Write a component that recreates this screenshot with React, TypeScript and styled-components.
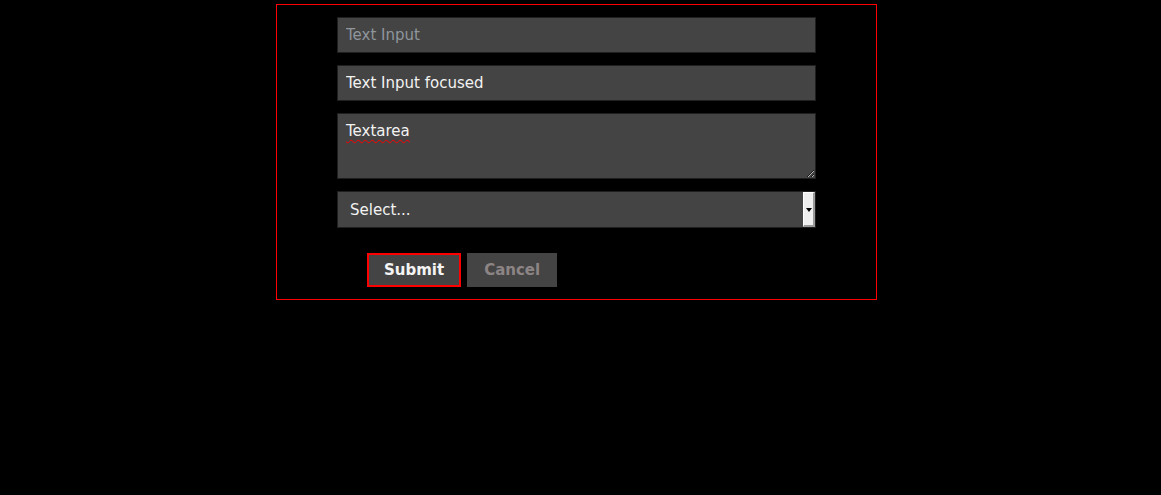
import React from "react";
import styled, { createGlobalStyle } from "styled-components";

const Global = createGlobalStyle`
  html, body {
    margin: 0;
    padding: 0;
    background: #000;
  }
  body {
    font-family: "DejaVu Sans", sans-serif;
  }
`;

const Page = styled.div`
  padding-top: 4px;
  padding-left: 276px;
`;

const Form = styled.form`
  box-sizing: border-box;
  width: 601px;
  height: 296px;
  border: 1px solid #ff0000;
  padding: 12px 0 0;
  display: flex;
  flex-direction: column;
  align-items: center;
`;

const Field = styled.div`
  width: 479px;
  margin-bottom: 12px;
  position: relative;
  display: flex;
`;

const fieldBase = `
  box-sizing: border-box;
  width: 100%;
  background: #444444;
  border: 1px solid #1f1f1f;
  color: #f2f2f2;
  font-family: "DejaVu Sans", sans-serif;
  font-size: 15px;
  outline: none;
  margin: 0;
  border-radius: 0;
`;

const TextInput = styled.input`
  ${fieldBase}
  height: 36px;
  padding: 0 8px;
  caret-color: #ffffff;
  &::placeholder {
    color: #8f969c;
    opacity: 1;
  }
`;

const TextArea = styled.textarea`
  ${fieldBase}
  height: 66px;
  padding: 8px 8px;
  line-height: 18px;
  text-decoration-line: underline;
  text-decoration-style: wavy;
  text-decoration-color: #ff0000;
  text-decoration-thickness: 1px;
  text-underline-offset: 3px;
  display: block;
`;

const Select = styled.select`
  ${fieldBase}
  appearance: none;
  -webkit-appearance: none;
  height: 37px;
  padding: 0 20px 0 12px;
`;

const DropButton = styled.span`
  position: absolute;
  top: 1px;
  right: 1px;
  bottom: 1px;
  width: 12px;
  box-sizing: border-box;
  background: #efefef;
  border-right: 2px solid #9a9a9a;
  border-bottom: 2px solid #9a9a9a;
  border-left: 1px solid #ffffff;
  border-top: 1px solid #ffffff;
  pointer-events: none;
  display: flex;
  align-items: center;
  justify-content: center;
  &::after {
    content: "";
    width: 0;
    height: 0;
    border-left: 3px solid transparent;
    border-right: 3px solid transparent;
    border-top: 4px solid #000;
    margin-top: 1px;
  }
`;

const Buttons = styled.div`
  width: 479px;
  display: flex;
  gap: 6px;
  padding-left: 30px;
  margin-top: 13px;
  box-sizing: border-box;
`;

const Button = styled.button<{ $primary?: boolean }>`
  box-sizing: border-box;
  height: 34px;
  padding: 0 15px;
  background: #444444;
  border: 2px solid ${(p) => (p.$primary ? "#ff0000" : "#444444")};
  color: ${(p) => (p.$primary ? "#f4f4f4" : "#8d8585")};
  font-family: "DejaVu Sans", sans-serif;
  font-weight: bold;
  font-size: 15px;
  border-radius: 0;
  cursor: pointer;
`;

export default function App() {
  return (
    <>
      <Global />
      <Page>
        <Form onSubmit={(e) => e.preventDefault()}>
          <Field>
            <TextInput placeholder="Text Input" />
          </Field>
          <Field>
            <TextInput
              defaultValue="Text Input focused"
              autoFocus
              onFocus={(e) => e.currentTarget.setSelectionRange(0, 0)}
            />
          </Field>
          <Field>
            <TextArea defaultValue="Textarea" spellCheck={false} />
          </Field>
          <Field>
            <Select defaultValue="">
              <option value="">Select...</option>
            </Select>
            <DropButton />
          </Field>
          <Buttons>
            <Button type="submit" $primary>
              Submit
            </Button>
            <Button type="button">Cancel</Button>
          </Buttons>
        </Form>
      </Page>
    </>
  );
}
